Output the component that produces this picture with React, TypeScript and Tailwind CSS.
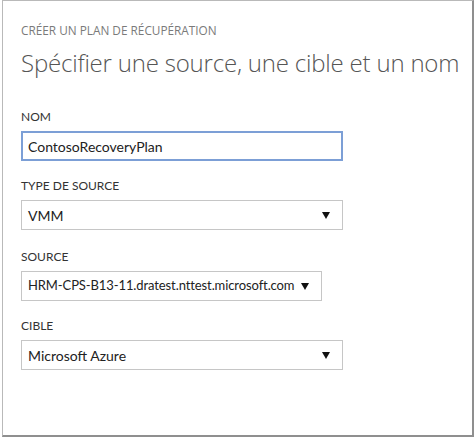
import { useState } from 'react';

const titleFont = { fontFamily: '"Open Sans", "Noto Sans", sans-serif' };
const bodyFont = { fontFamily: 'Lato, "Open Sans", sans-serif' };

function Caret() {
  return (
    <svg width="8" height="7" viewBox="0 0 8 7" className="shrink-0">
      <path d="M0 0 H8 L4 7 Z" fill="#111" />
    </svg>
  );
}

function Select({ value, width, text = 'text-[14px]' }: { value: string; width: string; text?: string }) {
  return (
    <div
      className={`${width} ${text} h-[30px] box-border border border-[#c6c6c6] bg-white flex items-center justify-between pl-[6px] pr-[12px] text-[#222] whitespace-nowrap`}
    >
      <span>{value}</span>
      <Caret />
    </div>
  );
}

function Label({ children }: { children: string }) {
  return <div className="text-[12px] leading-[14px] text-[#333] mb-[7px]">{children}</div>;
}

export default function App() {
  const [name, setName] = useState('ContosoRecoveryPlan');

  return (
    <div className="w-[476px] h-[439px] bg-white" style={bodyFont}>
      <div className="ml-[2px] w-[472px] h-[437px] box-border border border-[#b9b9b9] border-r-2 border-r-[#8f8f8f] border-b-2 border-b-[#8f8f8f] pl-[18px] pt-[22px]">
        <div className="text-[11.8px] leading-[14px] text-[#7a7a7a]" style={titleFont}>
          CRÉER UN PLAN DE RÉCUPÉRATION
        </div>
        <h1
          className="mt-[11px] text-[24px] leading-[30px] font-light text-[#555] tracking-[-0.2px] whitespace-nowrap"
          style={titleFont}
        >
          Spécifier une source, une cible et un nom
        </h1>

        <div className="mt-[32px] flex flex-col">
          <Label>NOM</Label>
          <input
            value={name}
            onChange={(e) => setName(e.target.value)}
            className="w-[322px] h-[30px] box-border border-2 border-[#7c9fd6] px-[5px] text-[14px] text-[#222] outline-none"
            style={bodyFont}
          />

          <div className="mt-[18px]">
            <Label>TYPE DE SOURCE</Label>
            <Select value="VMM" width="w-[322px]" />
          </div>

          <div className="mt-[20px]">
            <Label>SOURCE</Label>
            <Select
              value="HRM-CPS-B13-11.dratest.nttest.microsoft.com"
              width="w-[301px]"
              text="text-[13px] tracking-[-0.1px]"
            />
          </div>

          <div className="mt-[18px]">
            <Label>CIBLE</Label>
            <Select value="Microsoft Azure" width="w-[322px]" />
          </div>
        </div>
      </div>
    </div>
  );
}
